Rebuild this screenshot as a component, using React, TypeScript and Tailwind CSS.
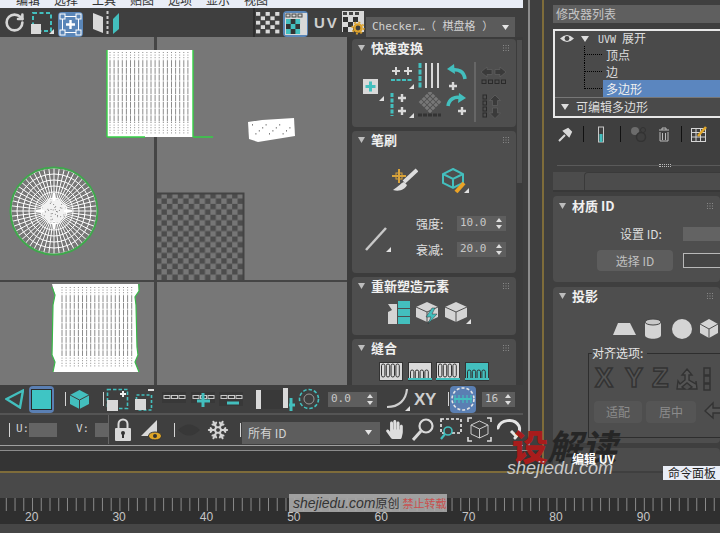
import React from "react";
import { RotateCw, Snowflake } from "lucide-react";
import { FaHandPaper } from "react-icons/fa";

const T = "#43bfbe";
const W = "#d9d9d9";
const range = (n: number) => Array.from({ length: n }, (_, i) => i);

type P = { c?: string };

function Tri({ x, y }: { x: number; y: number }) {
  return <path d={`M${x} ${y}l-5 0l5 -5z`} fill="#e0e0e0" />;
}

function Sep({ c = "" }: P) {
  return <div className={`w-px h-[14px] bg-[#d5d5d5] shrink-0 ${c}`} />;
}

function Spinner({ v, c = "" }: { v: string; c?: string }) {
  return (
    <div className={`h-[15px] bg-[#5e5e5e] flex items-center pl-[3px] pr-[4px] justify-between shrink-0 font-['DejaVu_Sans_Mono',monospace] text-[11px] text-[#c8c8c8] ${c}`}>
      <span>{v}</span>
      <svg width="6" height="11" className="shrink-0"><path d="M3 0l3 4h-6zM3 11l-3 -4h6z" fill="#ddd" /></svg>
    </div>
  );
}

function Header({ t }: { t: string }) {
  return (
    <div className="flex items-center h-[18px] pl-[6px] pr-[7px]">
      <svg width="7" height="6" className="shrink-0"><path d="M0 0h7l-3.5 6z" fill="#bdbdbd" /></svg>
      <span className="ml-[6px] -mt-[2px] text-[13px] leading-none font-bold text-[#f0f0f0] whitespace-nowrap">{t}</span>
      <svg width="6" height="6" className="ml-auto shrink-0">
        {range(9).map((i) => <rect key={i} x={(i % 3) * 2.5} y={Math.floor(i / 3) * 2.5} width="1" height="1" fill="#8a8a8a" />)}
      </svg>
    </div>
  );
}

function Dashes({ c = "", teal = false }: { c?: string; teal?: boolean }) {
  return (
    <svg width="24" height="18" className={`shrink-0 ${c}`}>
      <rect x="0" y="2" width="24" height="11" fill="#383838" />
      {[0, 1, 2].map((i) => <rect key={i} x={2 + i * 7.5} y="5.5" width="6" height="3" fill="none" stroke="#c8c8c8" />)}
      {teal && <path d="M12 3v14M6 11h13" stroke={T} strokeWidth="3" />}
    </svg>
  );
}

function Mesh({ x0, x1, y0, y1, step }: { x0: number; x1: number; y0: number; y1: number; step: number }) {
  return (
    <g>
      {range(Math.floor((x1 - x0) / step)).map((i) => {
        const x = x0 + i * step;
        return (
          <g key={i} stroke="#808080" strokeWidth="0.9">
            <line x1={x} x2={x} y1={y0} y2={y0 + 9} strokeDasharray="1 1.6" />
            <line x1={x} x2={x} y1={y0 + 9} y2={y1 - 12} strokeDasharray="6 0.8" />
            <line x1={x} x2={x} y1={y1 - 12} y2={y1} strokeDasharray="1 1.6" />
          </g>
        );
      })}
    </g>
  );
}

function Canvas() {
  const cx = 54, cy = 174;
  return (
    <svg width="347" height="348" className="block shrink-0">
      <defs>
        <pattern id="chk" width="10.88" height="10.88" patternUnits="userSpaceOnUse" x="156" y="156">
          <rect width="10.88" height="10.88" fill="#767676" />
          <rect width="5.44" height="5.44" fill="#4c4c4c" />
          <rect x="5.44" y="5.44" width="5.44" height="5.44" fill="#4c4c4c" />
        </pattern>
      </defs>
      <rect width="347" height="348" fill="#777777" />
      <rect x="156" y="156" width="87" height="88" fill="url(#chk)" />
      <path d="M156 156.5H243.5V244" fill="none" stroke="#444" strokeWidth="2" />
      <rect x="154" y="0" width="3" height="348" fill="#454545" />
      <rect x="0" y="243" width="347" height="2" fill="#454545" />
      {/* top mesh */}
      <rect x="107" y="13" width="86" height="87" fill="#fff" />
      <Mesh x0={110} x1={192} y0={15} y1={97} step={4.1} />
      <path d="M107 13V100M193 13V100M193 100H213M107 100H145" stroke="#35d145" strokeWidth="1.4" fill="none" />
      {/* small island */}
      <path d="M248 85L262 83L294 81L295 99L258 105L249 102Z" fill="#fff" />
      {range(12).map((i) => <rect key={i} x={252 + i * 3.4} y={87 + ((i * 7) % 4) * 3} width="1" height="1.6" fill="#808080" />)}
      {/* circle mesh */}
      <g stroke="#fff" strokeWidth="1" fill="none">
        {range(6).map((i) => <circle key={i} cx={cx} cy={cy} r={13 + i * 6} />)}
        {range(52).map((i) => {
          const a = (i * 2 * Math.PI) / 52;
          return <line key={i} x1={cx + 8 * Math.cos(a)} y1={cy + 8 * Math.sin(a)} x2={cx + 43 * Math.cos(a)} y2={cy + 43 * Math.sin(a)} />;
        })}
      </g>
      <circle cx={cx} cy={cy} r="12" fill="#f2f2f2" />
      <path d="M54 156V164M54 184V192M36 174H44M64 174H72" stroke="#fff" strokeWidth="2" />
      {range(30).map((i) => {
        const a = i * 2.4, r = 2 + (i % 10);
        return <rect key={i} x={cx + r * Math.cos(a)} y={cy + r * Math.sin(a)} width="1" height="1" fill="#8a8a8a" />;
      })}
      <circle cx={cx} cy={cy} r="43.5" fill="none" stroke="#3fa74c" strokeWidth="2" />
      {/* lower mesh */}
      <path d="M52 247H138L139 254L135 260L136 268L137 310L138 318L135 325L139 335H53L55 325L52 318L53 268L55 258Z" fill="#fff" />
      <path d="M52 250L55 258L53 268L52 318L55 325L53 335M139 247L139 254L135 260L136 268L137 310L138 318L135 325L139 335" stroke="#38b948" strokeWidth="1.2" fill="none" />
      <Mesh x0={62} x1={136} y0={250} y1={330} step={4.1} />
    </svg>
  );
}

function Panels() {
  return (
    <div className="w-[166px] h-[348px] shrink-0 overflow-hidden pl-[2px] pt-[2px] flex flex-col gap-[4px]">
      <div className="h-[88px] shrink-0 bg-[#4e4e4e] rounded-sm">
        <Header t="快速变换" />
        <div className="flex mt-[5px]">
          <svg width="26" height="40" className="ml-[10px] mt-[15px] shrink-0">
            <rect x="1" y="2" width="15" height="15" fill="#d9d9d9" />
            <path d="M8.5 4.5v10M3.5 9.5h10" stroke={T} strokeWidth="3" />
            <Tri x={22} y={24} />
          </svg>
          <div className="grid grid-cols-[27px_29px_28px] grid-rows-[30px_27px] ml-[2px]">
            <svg width="25" height="28"><path d="M2 9h8M6 5v8M14 9h8M18 5v8" stroke={W} strokeWidth="2" /><path d="M1 18h22" stroke={T} strokeWidth="2" strokeDasharray="4 1.5" /><Tri x={24} y={27} /></svg>
            <svg width="24" height="28"><path d="M3 1v25" stroke={T} strokeWidth="3" strokeDasharray="5 1.5" /><path d="M9 1v25M15 1v25M21 1v25" stroke={W} strokeWidth="2" /></svg>
            <svg width="24" height="28"><path d="M19 17C18 9 12 7 6 8" fill="none" stroke={T} strokeWidth="3.5" /><path d="M8 2L1 7L9 12Z" fill={T} /><path d="M3 24h8M7 20v8" stroke={W} strokeWidth="2.4" /></svg>
            <svg width="25" height="27"><path d="M2 1v23" stroke={T} strokeWidth="3" strokeDasharray="4 1.5" /><path d="M8 6h8M12 2v8M8 19h8M12 15v8" stroke={W} strokeWidth="2.4" /><Tri x={24} y={26} /></svg>
            <svg width="26" height="27">
              <g transform="rotate(45 13 10)" fill="#777">{range(16).map((i) => <rect key={i} x={5 + (i % 4) * 4.2} y={2 + Math.floor(i / 4) * 4.2} width="3.4" height="3.4" />)}</g>
              <path d="M1 23h23" stroke="#333" strokeWidth="3" strokeDasharray="4 1" />
            </svg>
            <svg width="24" height="27"><path d="M2 14C3 7 9 4 15 6" fill="none" stroke={T} strokeWidth="3.5" /><path d="M13 1L20 6L12 11Z" fill={T} /><path d="M12 19h8M16 15v8" stroke={W} strokeWidth="2.4" /></svg>
          </div>
          <div className="w-[2px] h-[60px] bg-[#666] shrink-0" />
          <div className="ml-[5px] flex flex-col gap-[10px] mt-[4px]">
            <svg width="26" height="18">
              <path d="M11 3.5H6V1L0 6L6 11V8.5H11ZM14 3.5H19V1L25 6L19 11V8.5H14Z" fill="#3a3a3a" stroke="#666" strokeWidth=".6" />
              {[1, 7.5, 14, 20.5].map((x) => <rect key={x} x={x} y="14" width="4" height="3.5" fill="none" stroke="#2a2a2a" />)}
            </svg>
            <svg width="22" height="25">
              {[1, 7, 13, 19].map((y) => <rect key={y} x="2" y={y} width="3.5" height="4" fill="none" stroke="#2a2a2a" />)}
              <path d="M14 1l5.5 5.5h-3v5h-5v-5h-3zM11.5 14h5v5h3l-5.5 5.5l-5.5 -5.5h3z" fill="#3a3a3a" stroke="#666" strokeWidth=".6" />
            </svg>
          </div>
        </div>
      </div>
      <div className="h-[142px] shrink-0 bg-[#4e4e4e] rounded-sm">
        <Header t="笔刷" />
        <div className="flex pl-[40px] mt-[19px]">
          <svg width="26" height="25" className="shrink-0">
            <path d="M25 2L12 14" stroke="#ddd" strokeWidth="4" />
            <path d="M12 14C9 15 7 18 1 22C8 24 13 21 15 17Z" fill="#ddd" />
            <path d="M7 1v14M0 8h14" stroke="#d9a33a" strokeWidth="2" />
            <rect x="4" y="5" width="6" height="6" fill="none" stroke="#d9a33a" />
          </svg>
          <svg width="30" height="26" className="ml-[22px] shrink-0">
            <path d="M13 1L23 6V15L13 20L3 15V6ZM3 6L13 11L23 6M13 11V20" fill="none" stroke={T} strokeWidth="2" />
            <path d="M24 15L16 24" stroke="#eba326" strokeWidth="4" />
            <Tri x={29} y={25} />
          </svg>
        </div>
        <div className="flex mt-[22px]">
          <svg width="29" height="29" className="ml-[12px] mt-[10px] shrink-0">
            <path d="M2 24L22 2" stroke="#c8c8c8" strokeWidth="2.5" />
            <Tri x={27} y={26} />
          </svg>
          <div className="ml-[23px] flex flex-col gap-[11px]">
            <div className="flex items-center h-[15px] text-[12px] text-[#e0e0e0]">
              <span className="w-[41px]">强度:</span><Spinner v="10.0" c="w-[49px]" />
            </div>
            <div className="flex items-center h-[15px] text-[12px] text-[#e0e0e0]">
              <span className="w-[41px]">衰减:</span><Spinner v="20.0" c="w-[49px]" />
            </div>
          </div>
        </div>
      </div>
      <div className="h-[58px] shrink-0 bg-[#4e4e4e] rounded-sm">
        <Header t="重新塑造元素" />
        <div className="flex pl-[35px] mt-[5px] gap-[5px]">
          <svg width="24" height="24" className="shrink-0">
            <path d="M1 4H10V24H1V12L5 10Z" fill="#d4d4d4" />
            <rect x="11" y="1" width="12" height="7" fill={T} /><rect x="11" y="9" width="12" height="7" fill={T} /><rect x="11" y="17" width="12" height="7" fill={T} />
          </svg>
          <svg width="24" height="24" className="shrink-0">
            <path d="M11 2L22 7V17L11 22L0 17V7Z" fill="#d4d4d4" />
            <path d="M0 7L11 12L22 7M11 12V22" stroke="#4e4e4e" fill="none" />
            <path d="M16 8L10 17H15L12 24L21 14H16L19 8Z" fill={T} stroke="#333" strokeWidth=".5" />
          </svg>
          <svg width="27" height="25" className="shrink-0">
            <path d="M11 2L22 7V17L11 22L0 17V7Z" fill="#d4d4d4" />
            <path d="M0 7L11 12L22 7M11 12V22" stroke="#4e4e4e" fill="none" />
            <Tri x={26} y={24} />
          </svg>
        </div>
      </div>
      <div className="h-[50px] shrink-0 bg-[#4e4e4e] rounded-sm">
        <Header t="缝合" />
        <div className="flex pl-[27px] mt-[5px] gap-[4.5px]">
          {[0, 1, 2, 3].map((k) => (
            <svg key={k} width="24" height="19" className="shrink-0">
              <rect x="0.5" y="0.5" width="23" height="18" fill={k === 3 ? T : "#d9d9d9"} stroke="#333" />
              {range(4).map((i) => <rect key={i} x={2.5 + i * 4.8} y={k % 2 ? 8 : 2} width="3.4" height={k % 2 ? 10 : 13} rx="1.7" fill={k === 3 ? T : "#d9d9d9"} stroke="#333" />)}
              {k > 0 && <path d="M0 17h24" stroke={T} strokeWidth="2" />}
            </svg>
          ))}
        </div>
      </div>
    </div>
  );
}

function TopBar() {
  return (
    <div className="h-[29px] flex items-center bg-[#3f3f3f]">
      <RotateCw size={21} strokeWidth={3} color="#d6d6d6" className="ml-[4px] shrink-0" />
      <svg width="24" height="23" className="ml-[5px] shrink-0">
        <rect x="3" y="2" width="18" height="18" fill="none" stroke={T} strokeWidth="2" strokeDasharray="4 2.5" />
        <rect x="1" y="13" width="10" height="10" fill="#d9d9d9" />
        <Tri x={24} y={23} />
      </svg>
      <div className="ml-[4px] w-[25px] h-[25px] bg-[#5a86b8] rounded-sm shrink-0 self-end">
        <svg width="25" height="25" className="block">
          <rect x="4.5" y="4.5" width="16" height="16" fill="none" stroke="#fff" />
          {[2, 18].map((x) => [2, 18].map((y) => <rect key={`${x}${y}`} x={x} y={y} width="5" height="5" fill="#5a86b8" stroke="#fff" />))}
          <path d="M12.5 8v9M8 12.5h9" stroke="#fff" strokeWidth="2.4" />
        </svg>
      </div>
      <svg width="29" height="25" className="ml-[9px] shrink-0">
        <path d="M1 3L11 7V23L1 19Z" fill="#d9d9d9" />
        <path d="M15.5 1V25" stroke="#ccc" strokeWidth="2" strokeDasharray="3 2" />
        <path d="M21 9L27 3V19L21 24Z" fill={T} />
      </svg>
      <div className="ml-[132px] w-[2px] h-[29px] bg-[#2e2e2e] shrink-0" />
      <svg width="24" height="22" className="ml-px shrink-0">
        {range(25).map((i) => (i % 2 === 0 ? <rect key={i} x={(i % 5) * 4.8} y={Math.floor(i / 5) * 4.4} width="4.2" height="3.8" fill="#d9d9d9" /> : null))}
      </svg>
      <div className="ml-[3px] w-[25px] h-[26px] bg-[#5a86b8] rounded-sm shrink-0 self-end">
        <svg width="25" height="26" className="block">
          <rect x="2" y="2" width="22" height="22" fill="#d9d9d9" />
          <rect x="3" y="3" width="4" height="3" fill="none" stroke="#444" /><rect x="9" y="3" width="4" height="3" fill="none" stroke="#444" /><rect x="15" y="3" width="4" height="3" fill="none" stroke="#444" />
          <rect x="3" y="8" width="14" height="15" fill="#333" />
          {range(9).map((i) => (i % 2 === 0 ? <rect key={i} x={3 + (i % 3) * 4.7} y={8 + Math.floor(i / 3) * 5} width="4.7" height="5" fill={T} /> : null))}
        </svg>
      </div>
      <span className="ml-[6px] w-[20px] text-[15px] leading-none font-bold tracking-[2px] text-[#cfcfcf] font-['Liberation_Sans',sans-serif] shrink-0">UV</span>
      <svg width="24" height="25" className="ml-[7px] shrink-0">
        <rect x="1" y="1" width="22" height="21" fill="#d9d9d9" />
        <rect x="2" y="2" width="4" height="3" fill="#444" /><rect x="8" y="2" width="4" height="3" fill="#444" /><rect x="14" y="2" width="4" height="3" fill="#444" />
        {range(9).map((i) => (i % 2 === 0 ? <rect key={i} x={2 + (i % 3) * 5} y={7 + Math.floor(i / 3) * 5} width="5" height="5" fill="#333" /> : null))}
        <circle cx="17" cy="18" r="3.6" fill="#3f3f3f" stroke="#dda22c" strokeWidth="2.4" />
        <circle cx="17" cy="18" r="5.8" fill="none" stroke="#dda22c" strokeWidth="1.6" strokeDasharray="2 2.5" />
      </svg>
      <div className="ml-px mt-[9px] w-[149px] h-[21px] bg-[#5b5b5b] flex items-center pl-[6px] pr-[6px] shrink-0 text-[12px] text-[#d0d0d0] font-['DejaVu_Sans_Mono','Noto_Sans_CJK_SC',monospace] whitespace-nowrap">
        <span className="text-[11px]">Checker…（ 棋盘格 ）</span>
        <svg width="7" height="5" className="ml-auto shrink-0"><path d="M0 0h7l-3.5 5z" fill="#e5e5e5" /></svg>
      </div>
    </div>
  );
}

function Bar1() {
  return (
    <div className="h-[28px] flex items-center border-b-2 border-[#555] box-content">
      <svg width="19" height="20" className="ml-[5px] shrink-0"><path d="M18 1.5L1.5 10L15 18.5Z" fill="none" stroke={T} strokeWidth="2.4" /></svg>
      <div className="ml-[5px] w-[25px] h-[27px] bg-[#5a7fb3] rounded-sm shrink-0 flex items-center justify-center">
        <div className="w-[21px] h-[21px] bg-[#3fc5c4] border border-[#2a2a2a]" />
      </div>
      <Sep c="ml-[11px]" />
      <svg width="21" height="21" className="ml-[3px] shrink-0">
        <path d="M10.5 1L20 6V15L10.5 20L1 15V6Z" fill={T} />
        <path d="M1 6L10.5 11L20 6M10.5 11V20" stroke="#3f3f3f" fill="none" />
      </svg>
      <Sep c="ml-[13px]" />
      <svg width="23" height="23" className="ml-[2px] shrink-0">
        <rect x="1.5" y="1.5" width="20" height="19" fill="none" stroke={T} strokeWidth="1.6" strokeDasharray="3.5 2" />
        <rect x="1" y="12" width="11" height="11" fill="#d9d9d9" />
        <path d="M14 6h6M17 3v6" stroke="#eee" strokeWidth="2" />
      </svg>
      <svg width="19" height="23" className="ml-[6px] shrink-0">
        <rect x="1.5" y="7" width="15" height="15" fill="none" stroke={T} strokeWidth="1.6" strokeDasharray="3 2" />
        <rect x="0" y="11" width="11" height="11" fill="#d9d9d9" />
        <path d="M13 2h6" stroke="#ddd" strokeWidth="2" />
      </svg>
      <Dashes c="ml-[8px]" />
      <Dashes c="ml-[5px]" teal />
      <svg width="24" height="18" className="ml-[4px] shrink-0">
        <rect x="0" y="2" width="24" height="14" fill="#383838" />
        {[0, 1, 2].map((i) => <rect key={i} x={2 + i * 7.5} y="5.5" width="6" height="3" fill="none" stroke="#c8c8c8" />)}
        <path d="M8 13h12" stroke={T} strokeWidth="3" />
      </svg>
      <div className="ml-[13px] w-[5px] h-[19px] bg-[#d9d9d9] shrink-0" />
      <div className="w-[22px] h-[19px] bg-[#393939] shrink-0" />
      <svg width="12" height="23" className="shrink-0">
        <rect x="0" y="0" width="5" height="20" fill="#d9d9d9" />
        <path d="M6 17h6M8 10v13" stroke={T} strokeWidth="3" />
      </svg>
      <svg width="22" height="22" className="ml-[3px] shrink-0">
        <circle cx="11" cy="11" r="9.5" fill="none" stroke={T} strokeWidth="1.6" strokeDasharray="3.5 2" />
        <circle cx="11" cy="11" r="5" fill="none" stroke="#999" />
      </svg>
      <Spinner v=" 0.0" c="ml-[8px] w-[49px]" />
      <svg width="24" height="24" className="ml-[9px] shrink-0">
        <path d="M1 20C13 20 20 13 21 2" fill="none" stroke="#cfcfcf" strokeWidth="2.2" />
        <Tri x={24} y={24} />
      </svg>
      <span className="ml-[4px] w-[26px] shrink-0 text-[17px] leading-none font-bold tracking-tight text-[#cfcfcf] font-['Liberation_Sans',sans-serif]">XY</span>
      <Sep c="ml-[8px]" />
      <div className="ml-px w-[26px] h-[27px] bg-[#5a7fb3] rounded-sm shrink-0">
        <svg width="26" height="27" className="block">
          <circle cx="13" cy="13" r="11" fill="none" stroke="#e5e5e5" strokeWidth="1.6" strokeDasharray="3 2" />
          <path d="M4 13h18" stroke={T} strokeWidth="2" />
          {[5, 9, 13, 17, 21].map((x) => <path key={x} d={`M${x} 9v8`} stroke={T} strokeWidth="1.2" />)}
        </svg>
      </div>
      <Spinner v="16" c="ml-[6px] w-[33px]" />
    </div>
  );
}

function Bar2() {
  return (
    <div className="h-[29px] flex items-center">
      <Sep c="ml-[9px]" />
      <span className="ml-[6px] w-[13px] shrink-0 text-[11px] text-[#d0d0d0] font-['DejaVu_Sans_Mono',monospace]">U:</span>
      <div className="w-[28px] h-[14px] bg-[#646464] shrink-0" />
      <span className="ml-[19px] w-[14px] shrink-0 text-[11px] text-[#d0d0d0] font-['DejaVu_Sans_Mono',monospace]">V:</span>
      <div className="ml-[5px] w-[13px] h-[14px] bg-[#646464] shrink-0" />
      <div className="w-px h-[29px] bg-[#666] shrink-0" />
      <svg width="16" height="23" className="ml-[6px] shrink-0">
        <path d="M3.5 10V6a4.5 4.5 0 0 1 9 0V10" fill="none" stroke="#d9d9d9" strokeWidth="2" />
        <rect x="0" y="10" width="16" height="13" rx="1" fill="#d9d9d9" />
        <circle cx="8" cy="15" r="2" fill="#333" /><path d="M8 15v5" stroke="#333" strokeWidth="2" />
      </svg>
      <svg width="24" height="23" className="ml-[9px] shrink-0">
        <path d="M1 18L17 2V18Z" fill="#d9d9d9" />
        <ellipse cx="15" cy="18" rx="6.5" ry="4" fill="#e0a526" stroke="#333" />
        <circle cx="15" cy="18" r="2" fill="#333" />
      </svg>
      <Sep c="ml-[10px]" />
      <svg width="22" height="14" className="ml-[3px] shrink-0"><path d="M0 7Q11 -4 22 7Q11 18 0 7Z" fill="#383838" /></svg>
      <div className="ml-[6px] w-[24px] h-[26px] shrink-0 flex items-center justify-center">
        <Snowflake size={22} strokeWidth={2.2} color="#d4d4d4" />
      </div>
      <Sep c="ml-[10px]" />
      <div className="ml-px mt-[6px] w-[138px] h-[22px] bg-[#5d5d5d] flex items-center pl-[6px] pr-[8px] text-[12px] text-[#d4d4d4] shrink-0">
        <span>所有 ID</span>
        <svg width="7" height="5" className="ml-auto shrink-0"><path d="M0 0h7l-3.5 5z" fill="#e5e5e5" /></svg>
      </div>
      <FaHandPaper size={19} color="#dedede" className="ml-[5px] shrink-0" />
      <svg width="22" height="23" className="ml-[8px] shrink-0">
        <circle cx="14" cy="8" r="6.5" fill="none" stroke="#d9d9d9" strokeWidth="2.2" />
        <path d="M9 13L1 22" stroke="#d9d9d9" strokeWidth="3" />
      </svg>
      <svg width="22" height="23" className="ml-[6px] shrink-0">
        <rect x="1" y="1" width="20" height="14" fill="none" stroke="#eee" strokeWidth="1.6" strokeDasharray="3 2" />
        <circle cx="8" cy="13" r="4" fill="#3f3f3f" stroke={T} strokeWidth="1.6" />
        <path d="M5 16L1 21" stroke={T} strokeWidth="2.2" />
      </svg>
      <svg width="25" height="25" className="ml-[5px] shrink-0">
        <path d="M12.5 4L21 8V17L12.5 21L4 17V8ZM4 8L12.5 12L21 8M12.5 12V21" fill="none" stroke="#ccc" />
        <path d="M1 5V1H5M20 1H24V5M1 20V24H5M20 24H24V20" fill="none" stroke="#ddd" strokeWidth="1.6" />
      </svg>
      <svg width="25" height="25" className="ml-[5px] shrink-0">
        <path d="M1 11C3 3 17 0 22 9C24 14 21 18 18 21" fill="none" stroke="#e5e5e5" strokeWidth="3" strokeLinecap="round" />
        <path d="M14 14L20 20" stroke="#e5e5e5" strokeWidth="3" />
      </svg>
    </div>
  );
}

function TreeRow({ t, sel, last }: { t: string; sel?: boolean; last?: boolean }) {
  return (
    <div className="flex h-[17px] shrink-0 pl-[29px]">
      {last ? (
        <div className="w-[18px] h-[9px] border-l border-b border-dotted border-black shrink-0" />
      ) : (
        <div className="w-[18px] h-[17px] border-l border-dotted border-black shrink-0 flex items-center">
          <div className="flex-1 border-t border-dotted border-black" />
        </div>
      )}
      {sel ? (
        <span className="ml-px pl-[3px] flex-1 bg-[#5b86bf] h-[17px] flex items-center text-[#f0f0f0]">{t}</span>
      ) : (
        <span className="ml-[3px] pl-px flex items-center">{t}</span>
      )}
    </div>
  );
}

function RightPanel() {
  return (
    <div className="flex-1 min-w-0 pl-[9px] pt-[5px] flex flex-col text-[12px] text-[#dedede] overflow-hidden">
      <div className="h-[18px] bg-[#5f5f5f] pl-[3px] flex items-center text-[#c6c6c6] shrink-0">修改器列表</div>
      <div className="mt-[6px] h-[89px] border-2 border-r-0 border-[#e8e8e8] bg-[#4a4a4a] shrink-0 flex flex-col leading-none">
        <div className="flex items-center h-[15px] shrink-0">
          <svg width="14" height="9" className="ml-[5px] shrink-0"><path d="M0 4.5Q7 -2.5 14 4.5Q7 11.5 0 4.5Z" fill="#ddd" /><circle cx="7" cy="4.5" r="2.4" fill="#444" /></svg>
          <svg width="8" height="6" className="ml-[7px] shrink-0"><path d="M0 0h8l-4 6z" fill="#ddd" /></svg>
          <span className="ml-[9px] whitespace-nowrap"><span className="text-[10px] font-['DejaVu_Sans_Mono',monospace]">UVW</span><span className="ml-[6px]">展开</span></span>
        </div>
        <TreeRow t="顶点" />
        <TreeRow t="边" />
        <TreeRow t="多边形" sel last />
        <div className="flex-1 border-t border-[#777] flex items-center pl-[6px] whitespace-nowrap">
          <svg width="8" height="6" className="shrink-0"><path d="M0 0h8l-4 6z" fill="#ddd" /></svg>
          <span className="ml-[7px]">可编辑多边形</span>
        </div>
      </div>
      <div className="h-[32px] flex items-center shrink-0">
        <svg width="15" height="15" className="ml-[5px] shrink-0"><path d="M1 14L7 8M6 4L11 9L13 5L10 2Z" stroke="#d9d9d9" strokeWidth="2" fill="#d9d9d9" /></svg>
        <div className="ml-[10px] w-px h-[16px] bg-[#111] shrink-0" />
        <svg width="9" height="17" className="ml-[13px] shrink-0"><rect x="1.5" y="1" width="5" height="15" fill="none" stroke="#c8c8c8" /><rect x="2.5" y="8" width="3" height="8" fill={T} /></svg>
        <div className="ml-[14px] w-px h-[16px] bg-[#111] shrink-0" />
        <svg width="18" height="16" className="ml-[9px] shrink-0"><circle cx="5" cy="5" r="4" fill="#6c6c6c" /><circle cx="11" cy="11" r="4.5" fill="none" stroke="#333" strokeWidth="1.5" /><circle cx="13" cy="4" r="2.5" fill="none" stroke="#333" /></svg>
        <svg width="12" height="15" className="ml-[10px] shrink-0"><path d="M1 3H11M4 3V1H8V3M2 5V14H10V5M4.5 6V13M7.5 6V13" stroke="#bbb" fill="none" /></svg>
        <div className="ml-[11px] w-px h-[16px] bg-[#111] shrink-0" />
        <svg width="17" height="16" className="ml-[9px] shrink-0">
          <rect x="0.5" y="2.5" width="14" height="13" fill="none" stroke="#d5d5d5" /><path d="M0.5 6.5H14M5 3V15M9.5 3V15M1 11H14" stroke="#d5d5d5" />
          <path d="M7 10L15 1" stroke="#e1a72a" strokeWidth="2.6" />
        </svg>
      </div>
      <div className="h-[22px] pt-[15px] shrink-0 pl-[4px]">
        <div className="w-[163px] border-t border-[#5a5a5a] flex justify-end pr-[49px]">
          <div className="-mt-[2px] w-[12px] h-[3px] bg-[#3f3f3f] border-y border-dotted border-[#bbb]" />
        </div>
      </div>
      <div className="h-[20px] shrink-0 bg-[#4c4c4c] border-b-2 border-[#383838] pl-[31px]">
        <div className="h-[18px] border-l border-t border-[#3a3a3a] rounded-tl-sm" />
      </div>
      <div className="mt-[4px] h-[86px] bg-[#4e4e4e] shrink-0 rounded-sm">
        <div className="pt-[1px]"><Header t="材质 ID" /></div>
        <div className="flex items-center mt-[12px] h-[14px]">
          <span className="ml-[67px] w-[63px] shrink-0 whitespace-nowrap">设置 ID:</span>
          <div className="w-[40px] h-[14px] bg-[#636363] shrink-0" />
        </div>
        <div className="flex items-center mt-[9px]">
          <div className="ml-[44px] w-[76px] h-[21px] rounded-sm bg-[#5d5d5d] flex items-center justify-center text-[#c0c0c0] shrink-0">选择 ID</div>
          <div className="ml-[10px] w-[40px] h-[15px] border border-[#b8b8b8] bg-[#454545] shrink-0" />
        </div>
      </div>
      <div className="mt-[5px] h-[156px] bg-[#4e4e4e] shrink-0 rounded-sm">
        <Header t="投影" />
        <div className="flex items-center mt-[13px] ml-[59px] gap-[6px]">
          <svg width="25" height="14" className="shrink-0"><path d="M6 1H18L24 13H1Z" fill="#d4d4d4" /></svg>
          <svg width="18" height="21" className="ml-px shrink-0"><path d="M1 4V17C1 22 17 22 17 17V4Z" fill="#d4d4d4" /><ellipse cx="9" cy="4" rx="8" ry="3" fill="#c8c8c8" stroke="#444" /></svg>
          <div className="ml-[4px] w-[20px] h-[20px] rounded-full bg-[#d4d4d4] shrink-0" />
          <svg width="20" height="21" className="ml-px shrink-0"><path d="M10 1L19 6V15L10 20L1 15V6Z" fill="#d4d4d4" /><path d="M1 6L10 11L19 6M10 11V20" stroke="#4e4e4e" fill="none" /></svg>
        </div>
        <div className="ml-[35px] mt-[14px] h-[85px] border-t border-l border-b border-[#2e2e2e] relative">
          <span className="absolute -top-[9px] left-[3px] bg-[#4e4e4e] pr-[4px] leading-4 whitespace-nowrap text-[#e5e5e5]">对齐选项:</span>
          <div className="flex items-center pl-[6px] pt-[9px] h-[40px] text-[27px] leading-none font-bold text-[#555] [-webkit-text-stroke:1.5px_#333] font-['Liberation_Sans',sans-serif]">
            <span className="w-[30px] shrink-0">X</span><span className="w-[27px] shrink-0">Y</span><span className="w-[24px] shrink-0">Z</span>
            <svg width="22" height="24" className="shrink-0"><path d="M11 2L16 8H13V13L20 17V14L21 22L13 22L16 20L11 16L6 20L9 22L1 22L2 14L4 17L9 13V8H6Z" fill="#555" stroke="#333" strokeWidth="1.4" /></svg>
            <svg width="18" height="24" className="ml-[5px] shrink-0"><path d="M1 1h6v7H1zM1 9h6v7H1zM1 17h6v6H1z" fill="none" stroke="#333" strokeWidth="1.5" /></svg>
          </div>
          <div className="flex mt-[7px] ml-[5px] gap-[4px] text-[#8c8c8c]">
            <div className="w-[48px] h-[22px] rounded-sm bg-[#555] flex items-center justify-center shrink-0">适配</div>
            <div className="w-[50px] h-[22px] rounded-sm bg-[#555] flex items-center justify-center shrink-0">居中</div>
            <svg width="20" height="20" className="ml-[4px] shrink-0"><path d="M9 2L1 10L9 17V12H20V7H9Z" fill="#555" stroke="#333" strokeWidth="1.4" /></svg>
          </div>
        </div>
      </div>
      <div className="mt-[5px] h-[23px] bg-[#4c4c4c] shrink-0 rounded-t-sm" />
    </div>
  );
}

function Timeline() {
  const labels = [20, 30, 40, 50, 60, 70, 80, 90];
  return (
    <div className="flex-1 flex flex-col">
      <div className="h-[25px] bg-[#494949] shrink-0" />
      <div className="h-[26px] bg-[#2f2f2f] shrink-0 overflow-hidden">
        <svg width="720" height="13" className="block">
          {range(82).map((i) => <line key={i} x1={6.3 + i * 8.74} x2={6.3 + i * 8.74} y1="0" y2="13" stroke="#8a8a8a" strokeWidth="1" />)}
        </svg>
        <div className="flex -ml-[12px] text-[12px] leading-[12px] text-[#c6c6c6] font-['Liberation_Sans',sans-serif]">
          {labels.map((l) => <span key={l} className="w-[87.4px] shrink-0 text-center">{l}</span>)}
        </div>
      </div>
      <div className="flex-1 bg-[#464646]" />
    </div>
  );
}

export default function App() {
  return (
    <div className="relative w-[720px] h-[533px] overflow-hidden flex flex-col bg-[#3f3f3f] font-['Noto_Sans_CJK_SC','Liberation_Sans',sans-serif]">
      <div className="flex h-[473px] shrink-0">
        <div className="w-[544px] shrink-0 border-r-2 border-b-2 border-[#7e6c3a] flex flex-col">
          <div className="w-[530px] h-[451px] shrink-0 border-r-2 border-b border-[#8c8c8c] flex flex-col pr-[5px]">
            <div className="h-[8px] bg-[#e9edf6] overflow-hidden shrink-0 flex gap-[14px] pl-[16px] text-[12px] leading-[12px] text-[#333] whitespace-nowrap">
              {["编辑", "选择", "工具", "贴图", "选项", "显示", "视图"].map((t) => <span key={t} className="-mt-[6px]">{t}</span>)}
            </div>
            <TopBar />
            <div className="flex h-[348px] shrink-0 bg-[#3c3c3c]">
              <div className="w-[350px] shrink-0"><Canvas /></div>
              <Panels />
              <div className="w-[5px] shrink-0 ml-px">
                <div className="h-[143px] mt-[3px] bg-[#4f4f4f]" />
              </div>
            </div>
            <Bar1 />
            <Bar2 />
            <div className="mt-[1px] h-px bg-[#a0a0a0] shrink-0" />
            <div className="flex-1" />
          </div>
          <div className="flex-1 bg-[#343434] min-h-0" />
        </div>
        <RightPanel />
      </div>
      <Timeline />
      <div className="absolute left-[289px] top-[494px] w-[158px] h-[18px] bg-[#aaaaaa]/90 flex items-center pl-[4px] whitespace-nowrap">
        <span className="italic text-[14px] text-[#333] font-['Liberation_Sans',sans-serif]">shejiedu.com</span>
        <span className="text-[12px] text-[#333]">原创</span>
        <span className="ml-[3px] text-[11px] text-[#c9504f]">禁止转载</span>
      </div>
      <span className="absolute left-[512px] top-[423px] text-[36px] leading-[44px] font-black text-[#a81c1c]">设</span>
      <span className="absolute left-[547px] top-[425px] text-[35px] leading-[40px] italic font-bold text-[#262626]">解读</span>
      <span className="absolute left-[507px] top-[457px] text-[18px] leading-[22px] italic text-[#c8c8c8] font-['Liberation_Sans',sans-serif]">shejiedu.com</span>
      <span className="absolute left-[572px] top-[452px] text-[12px] leading-[14px] font-bold text-white">编辑 UV</span>
      <div className="absolute left-[663px] top-[466px] w-[58px] h-[14px] bg-[#e9edf6] text-[12px] leading-[14px] text-[#222] pl-[5px] whitespace-nowrap">命令面板</div>
    </div>
  );
}
